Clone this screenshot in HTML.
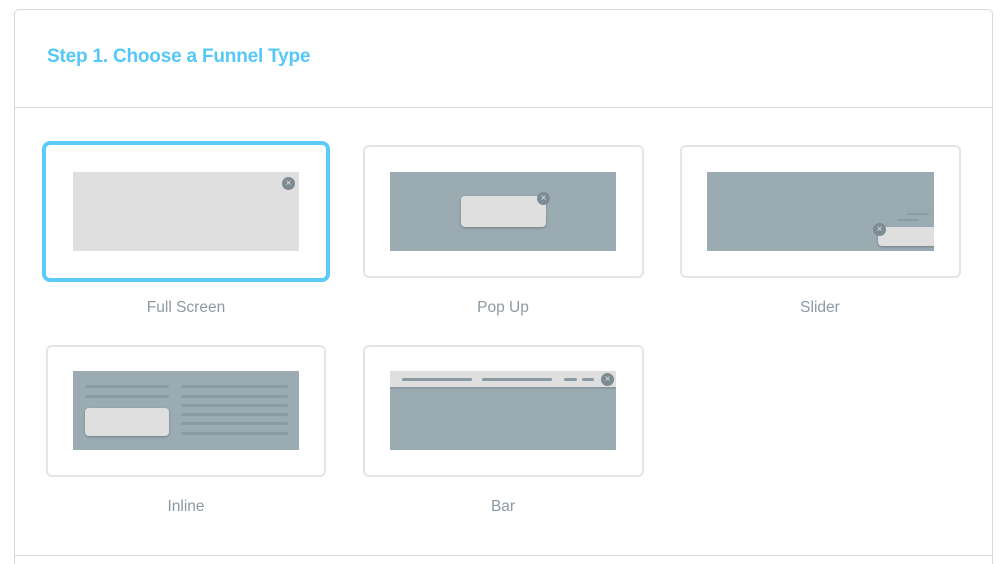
<!DOCTYPE html>
<html><head><style>
html,body{margin:0;padding:0;width:1000px;height:564px;overflow:hidden}
body{background:#fff;position:relative;font-family:"Liberation Sans",sans-serif}
.abs{position:absolute}
.panel{left:14px;top:9px;width:979px;height:570px;border:1px solid #d3dce1;border-radius:5px;box-sizing:border-box}
.hd{left:15px;top:107px;width:977px;height:1px;background:#d3dce1}
.ft{left:15px;top:555px;width:977px;height:1px;background:#d3dce1}
h1{position:absolute;left:47px;top:46px;margin:0;font-size:19px;font-weight:bold;color:#55c8f9;letter-spacing:-0.2px}
.card{border:2px solid #e2e6e9;border-radius:6px;background:#fff;box-sizing:border-box}
.sel{border:4px solid #5bcbfa;border-radius:8px}
.lbl{font-size:15.5px;color:#8b9aa2;text-align:center;width:280px}
.g{background:#9aabb2}
.l{background:#8a9ba3;height:3px;border-radius:2px}
.x{width:13px;height:13px;border-radius:50%;background:#7d8b92;color:#dfe3e5;font-size:10px;line-height:13px;text-align:center}
.box{background:#dfdfdf;border-radius:4px;box-shadow:0 1px 2px rgba(0,0,0,.25)}
</style></head><body>
<div class="abs panel"></div>
<h1>Step 1. Choose a Funnel Type</h1>
<div class="abs hd"></div>
<div class="abs ft"></div>

<div class="abs card sel" style="left:42px;top:141px;width:288px;height:141px"></div>
<div class="abs" style="left:73px;top:172px;width:226px;height:79px;background:#dfdfdf"></div>
<div class="abs x" style="left:282px;top:177px">×</div>
<div class="abs lbl" style="left:46px;top:299px">Full Screen</div>

<div class="abs card" style="left:363px;top:145px;width:281px;height:133px"></div>
<div class="abs g" style="left:390px;top:172px;width:226px;height:79px"></div>
<div class="abs box" style="left:461px;top:196px;width:85px;height:31px"></div>
<div class="abs x" style="left:537px;top:192px">×</div>
<div class="abs lbl" style="left:363px;top:299px">Pop Up</div>

<div class="abs card" style="left:680px;top:145px;width:281px;height:133px"></div>
<div class="abs g" style="left:707px;top:172px;width:227px;height:79px;overflow:hidden">
<div class="abs box" style="left:171px;top:55px;width:70px;height:19px"></div>
<div class="abs l" style="left:200px;top:41px;width:22px;height:2px"></div>
<div class="abs l" style="left:190px;top:47px;width:22px;height:2px"></div>
</div>
<div class="abs x" style="left:873px;top:223px">×</div>
<div class="abs lbl" style="left:680px;top:299px">Slider</div>

<div class="abs card" style="left:46px;top:345px;width:280px;height:132px"></div>
<div class="abs g" style="left:73px;top:371px;width:226px;height:79px"></div>
<div class="abs l" style="left:85px;top:385px;width:84px"></div>
<div class="abs l" style="left:85px;top:395px;width:84px"></div>
<div class="abs box" style="left:85px;top:408px;width:84px;height:28px"></div>
<div class="abs l" style="left:181px;top:385px;width:107px"></div>
<div class="abs l" style="left:181px;top:395px;width:107px"></div>
<div class="abs l" style="left:181px;top:404px;width:107px"></div>
<div class="abs l" style="left:181px;top:413px;width:107px"></div>
<div class="abs l" style="left:181px;top:422px;width:107px"></div>
<div class="abs l" style="left:181px;top:432px;width:107px"></div>
<div class="abs lbl" style="left:46px;top:498px">Inline</div>

<div class="abs card" style="left:363px;top:345px;width:281px;height:132px"></div>
<div class="abs g" style="left:390px;top:371px;width:226px;height:79px"></div>
<div class="abs" style="left:390px;top:371px;width:226px;height:16px;background:#dfdfdf;border-bottom:2px solid #8a9ba3"></div>
<div class="abs l" style="left:402px;top:378px;width:70px"></div>
<div class="abs l" style="left:482px;top:378px;width:70px"></div>
<div class="abs l" style="left:564px;top:378px;width:13px"></div>
<div class="abs l" style="left:582px;top:378px;width:12px"></div>
<div class="abs x" style="left:601px;top:373px">×</div>
<div class="abs lbl" style="left:363px;top:498px">Bar</div>
</body></html>
